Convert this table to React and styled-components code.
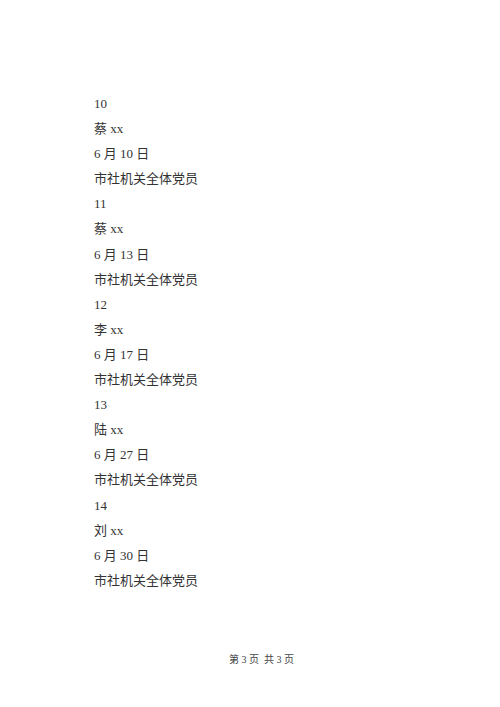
import React from "react";
import styled, { createGlobalStyle } from "styled-components";

const Global = createGlobalStyle`
  html, body { margin: 0; padding: 0; background: #fff; }
`;

const Page = styled.div`
  width: 500px;
  height: 707px;
  box-sizing: border-box;
  padding: 91px 0 0 94px;
  display: flex;
  flex-direction: column;
  font-family: "Liberation Serif", "Noto Sans CJK SC", serif;
  color: #333;
`;

const Line = styled.div`
  font-size: 13px;
  line-height: 25.1px;
  height: 25.1px;
  white-space: pre;
`;

const Footer = styled.div`
  margin-top: auto;
  margin-bottom: 41px;
  margin-left: 135px;
  font-size: 10px;
  color: #444;
  white-space: pre;
`;

const entries = [
  ["10", "蔡 xx", "6 月 10 日"],
  ["11", "蔡 xx", "6 月 13 日"],
  ["12", "李 xx", "6 月 17 日"],
  ["13", "陆 xx", "6 月 27 日"],
  ["14", "刘 xx", "6 月 30 日"],
];

export default function App() {
  return (
    <>
      <Global />
      <Page>
        {entries.map(([n, name, date]) => (
          <React.Fragment key={n}>
            <Line>{n}</Line>
            <Line>{name}</Line>
            <Line>{date}</Line>
            <Line>市社机关全体党员</Line>
          </React.Fragment>
        ))}
        <Footer>第 3 页  共 3 页</Footer>
      </Page>
    </>
  );
}
